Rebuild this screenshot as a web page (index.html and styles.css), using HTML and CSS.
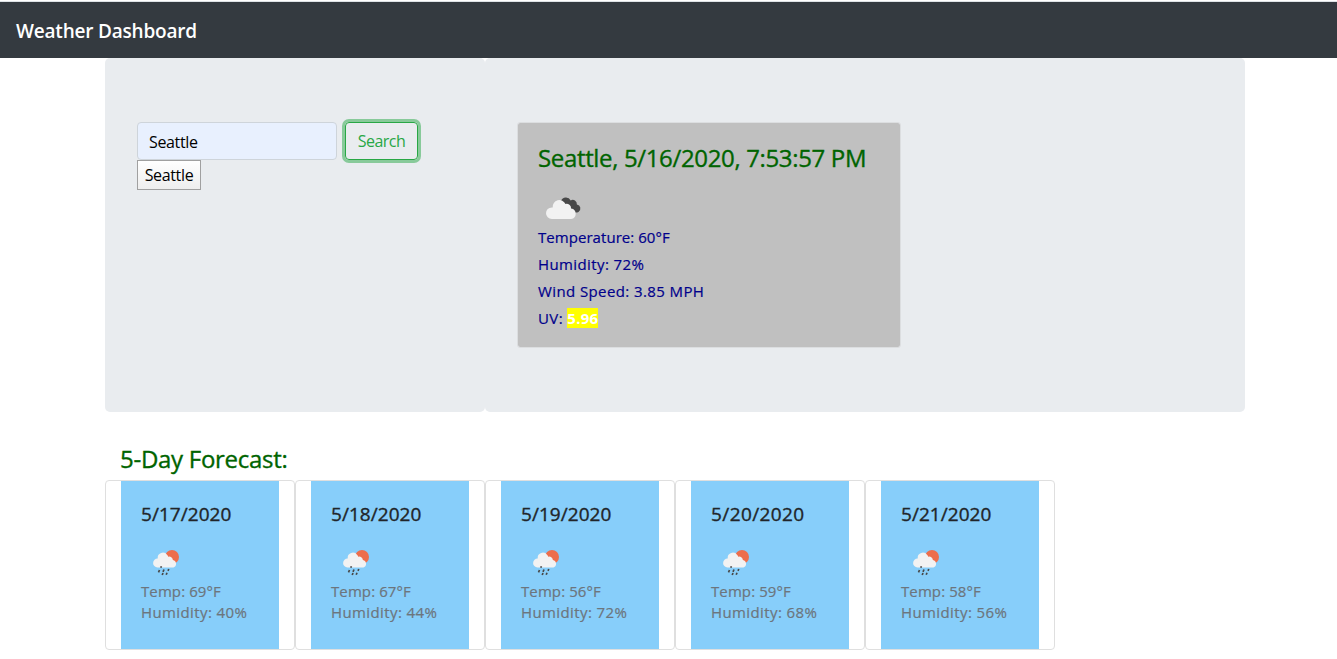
FILE: index.html
```html
<!DOCTYPE html>
<html lang="en">
<head>
<meta charset="utf-8">
<title>Weather Dashboard</title>
<link rel="stylesheet" href="styles.css">
</head>
<body>
<svg class="sprite" aria-hidden="true">
  <symbol id="clouds" viewBox="0 0 36 24">
    <path fill="#484848" d="M15 6A5.300 5.300 0 0 1 24.700 5.400a4.200 4.200 0 0 1 6.200 4 4.100 4.100 0 0 1 1.600 7.500 5 5 0 0 1-5 0L15 9.500z"/>
    <path fill="#f2f2f2" d="M5.800 24a5.800 5.800 0 0 1 0-11.600h.9a6.700 6.700 0 0 1 12.800-3.400 4.500 4.500 0 0 1 5.600 4.500 5.300 5.300 0 0 1 0 10.500z"/>
  </symbol>
  <symbol id="rain" viewBox="0 0 28 27">
    <circle fill="#ec6e4c" cx="20" cy="8" r="7"/>
    <path fill="#f2f2f2" d="M5.500 18.500a4.500 4.500 0 0 1 .2-9A5.200 5.200 0 0 1 15.200 6q.8.800 1 1.800a3.600 3.600 0 0 1 4.700 3.200A3.900 3.900 0 0 1 21.500 18.500z"/>
    <path stroke="#484848" stroke-width="1.700" fill="none" d="M9.400 17.300l-.6 1.500M7.500 21l-1 2.300M12 20.500l-1 2.300M16.800 20l-.8 1.800M11 24l-.8 2M15 23.800l-.8 2"/>
  </symbol>
</svg>
<nav class="navbar"><span class="navbar-brand">Weather Dashboard</span></nav>
<div class="container">
  <main class="row">
    <section class="jumbotron search-panel">
      <form class="search-form">
        <input class="search-input" type="text" value="Seattle" aria-label="City">
        <button class="search-button" type="button">Search</button>
      </form>
      <button class="history-button" type="button">Seattle</button>
    </section>
    <section class="jumbotron current-panel">
      <article class="current-card">
        <h3 class="current-title">Seattle, 5/16/2020, 7:53:57 PM</h3>
        <svg class="current-icon"><use href="#clouds"/></svg>
        <p class="current-line">Temperature: 60°F</p>
        <p class="current-line wide">Humidity: 72%</p>
        <p class="current-line wide">Wind Speed: 3.85 MPH</p>
        <p class="current-line wide">UV: <span class="uv">5.96</span></p>
      </article>
    </section>
  </main>
  <h3 class="forecast-title">5-Day Forecast:</h3>
  <div class="forecast">
    <article class="day"><div class="day-body"><h5 class="day-date">5/17/2020</h5><svg class="day-icon"><use href="#rain"/></svg><p class="day-line">Temp: 69°F</p><p class="day-line wide">Humidity: 40%</p></div></article>
    <article class="day"><div class="day-body"><h5 class="day-date">5/18/2020</h5><svg class="day-icon"><use href="#rain"/></svg><p class="day-line">Temp: 67°F</p><p class="day-line wide">Humidity: 44%</p></div></article>
    <article class="day"><div class="day-body"><h5 class="day-date">5/19/2020</h5><svg class="day-icon"><use href="#rain"/></svg><p class="day-line">Temp: 56°F</p><p class="day-line wide">Humidity: 72%</p></div></article>
    <article class="day"><div class="day-body"><h5 class="day-date day-date-wide">5/20/2020</h5><svg class="day-icon"><use href="#rain"/></svg><p class="day-line">Temp: 59°F</p><p class="day-line wide">Humidity: 68%</p></div></article>
    <article class="day"><div class="day-body"><h5 class="day-date">5/21/2020</h5><svg class="day-icon"><use href="#rain"/></svg><p class="day-line">Temp: 58°F</p><p class="day-line wide">Humidity: 56%</p></div></article>
  </div>
</div>
</body>
</html>
```
FILE: styles.css
```css
* { box-sizing: border-box; }
body {
  margin: 0;
  background: #fff;
  color: #212529;
  font: 400 16px/24px "Open Sans", "Noto Sans", sans-serif;
  overflow: hidden;
}
h3, h5, p { margin: 0; font-weight: 400; }
h3, h5 { -webkit-text-stroke: .35px currentColor; }
p { -webkit-text-stroke: .2px currentColor; }
.sprite { display: none; }
.navbar {
  display: flex;
  align-items: center;
  height: 58px;
  padding: 2px 16px 0;
  border-top: 1px solid #fff;
  background: linear-gradient(#dee2e6 1px, #343a40 1px);
}
.navbar-brand { color: #fff; font-size: 19px; font-weight: 600; letter-spacing: -.2px; }
.container { width: 1140px; margin-left: 105px; }
.row { display: flex; }
.jumbotron { height: 354px; padding: 64px 32px; border-radius: 5px; background: #e9ecef; }
.search-panel { width: 380px; }
.current-panel { width: 760px; }
.search-form { display: flex; gap: 8px; height: 38px; }
.search-input {
  width: 200px;
  padding: 8px 11px 6px;
  border: 1px solid #ced4da;
  border-radius: 4px;
  background: #e8f0fe;
  color: #000;
  font: inherit;
  letter-spacing: -.35px;
}
.search-button {
  width: 73px;
  padding: 0;
  border: 1px solid #28a745;
  border-radius: 4px;
  background: transparent;
  box-shadow: 0 0 0 3px rgba(40, 167, 69, .5);
  color: #28a745;
  font: inherit;
  letter-spacing: -.5px;
}
.history-button {
  display: block;
  width: 64px;
  height: 30px;
  padding: 0;
  border: 1px solid #a0a0a0;
  background: linear-gradient(#fff, #eee);
  color: #000;
  font: inherit;
  letter-spacing: -.35px;
}
.current-card {
  width: 384px;
  height: 226px;
  padding: 19px 20px 20px;
  border: 1px solid #dcdee0;
  border-radius: 3px;
  background: #c0c0c0 padding-box;
}
.current-title, .forecast-title { color: #006400; font-size: 24px; line-height: 32px; letter-spacing: -.35px; }
.forecast-title { letter-spacing: -.28px; }
.current-icon { display: block; width: 36px; height: 24px; margin: 21px 0 5px 8px; }
.current-line { color: #00008b; font-size: 15px; line-height: 27px; letter-spacing: .05px; }
.uv { background: #ff0; color: #fff; font-weight: 700; letter-spacing: .25px; -webkit-text-stroke: 0; }
.forecast-title { padding: 31px 15px 5px; }
.forecast { display: flex; }
.day { width: 190px; height: 170px; padding: 0 15px; border: 1px solid #dfdfdf; border-radius: 4px; }
.day-body { height: 168px; padding: 20px; background: #87cefa; }
.day-date { font-size: 19px; line-height: 26px; letter-spacing: .05px; }
.day-date-wide { letter-spacing: .4px; }
.day-icon { display: block; width: 28px; height: 27px; margin: 22px 0 5px 11px; }
.day-line { color: #6c757d; font-size: 15px; line-height: 21px; letter-spacing: .1px; }
.wide { letter-spacing: .4px; }
```
